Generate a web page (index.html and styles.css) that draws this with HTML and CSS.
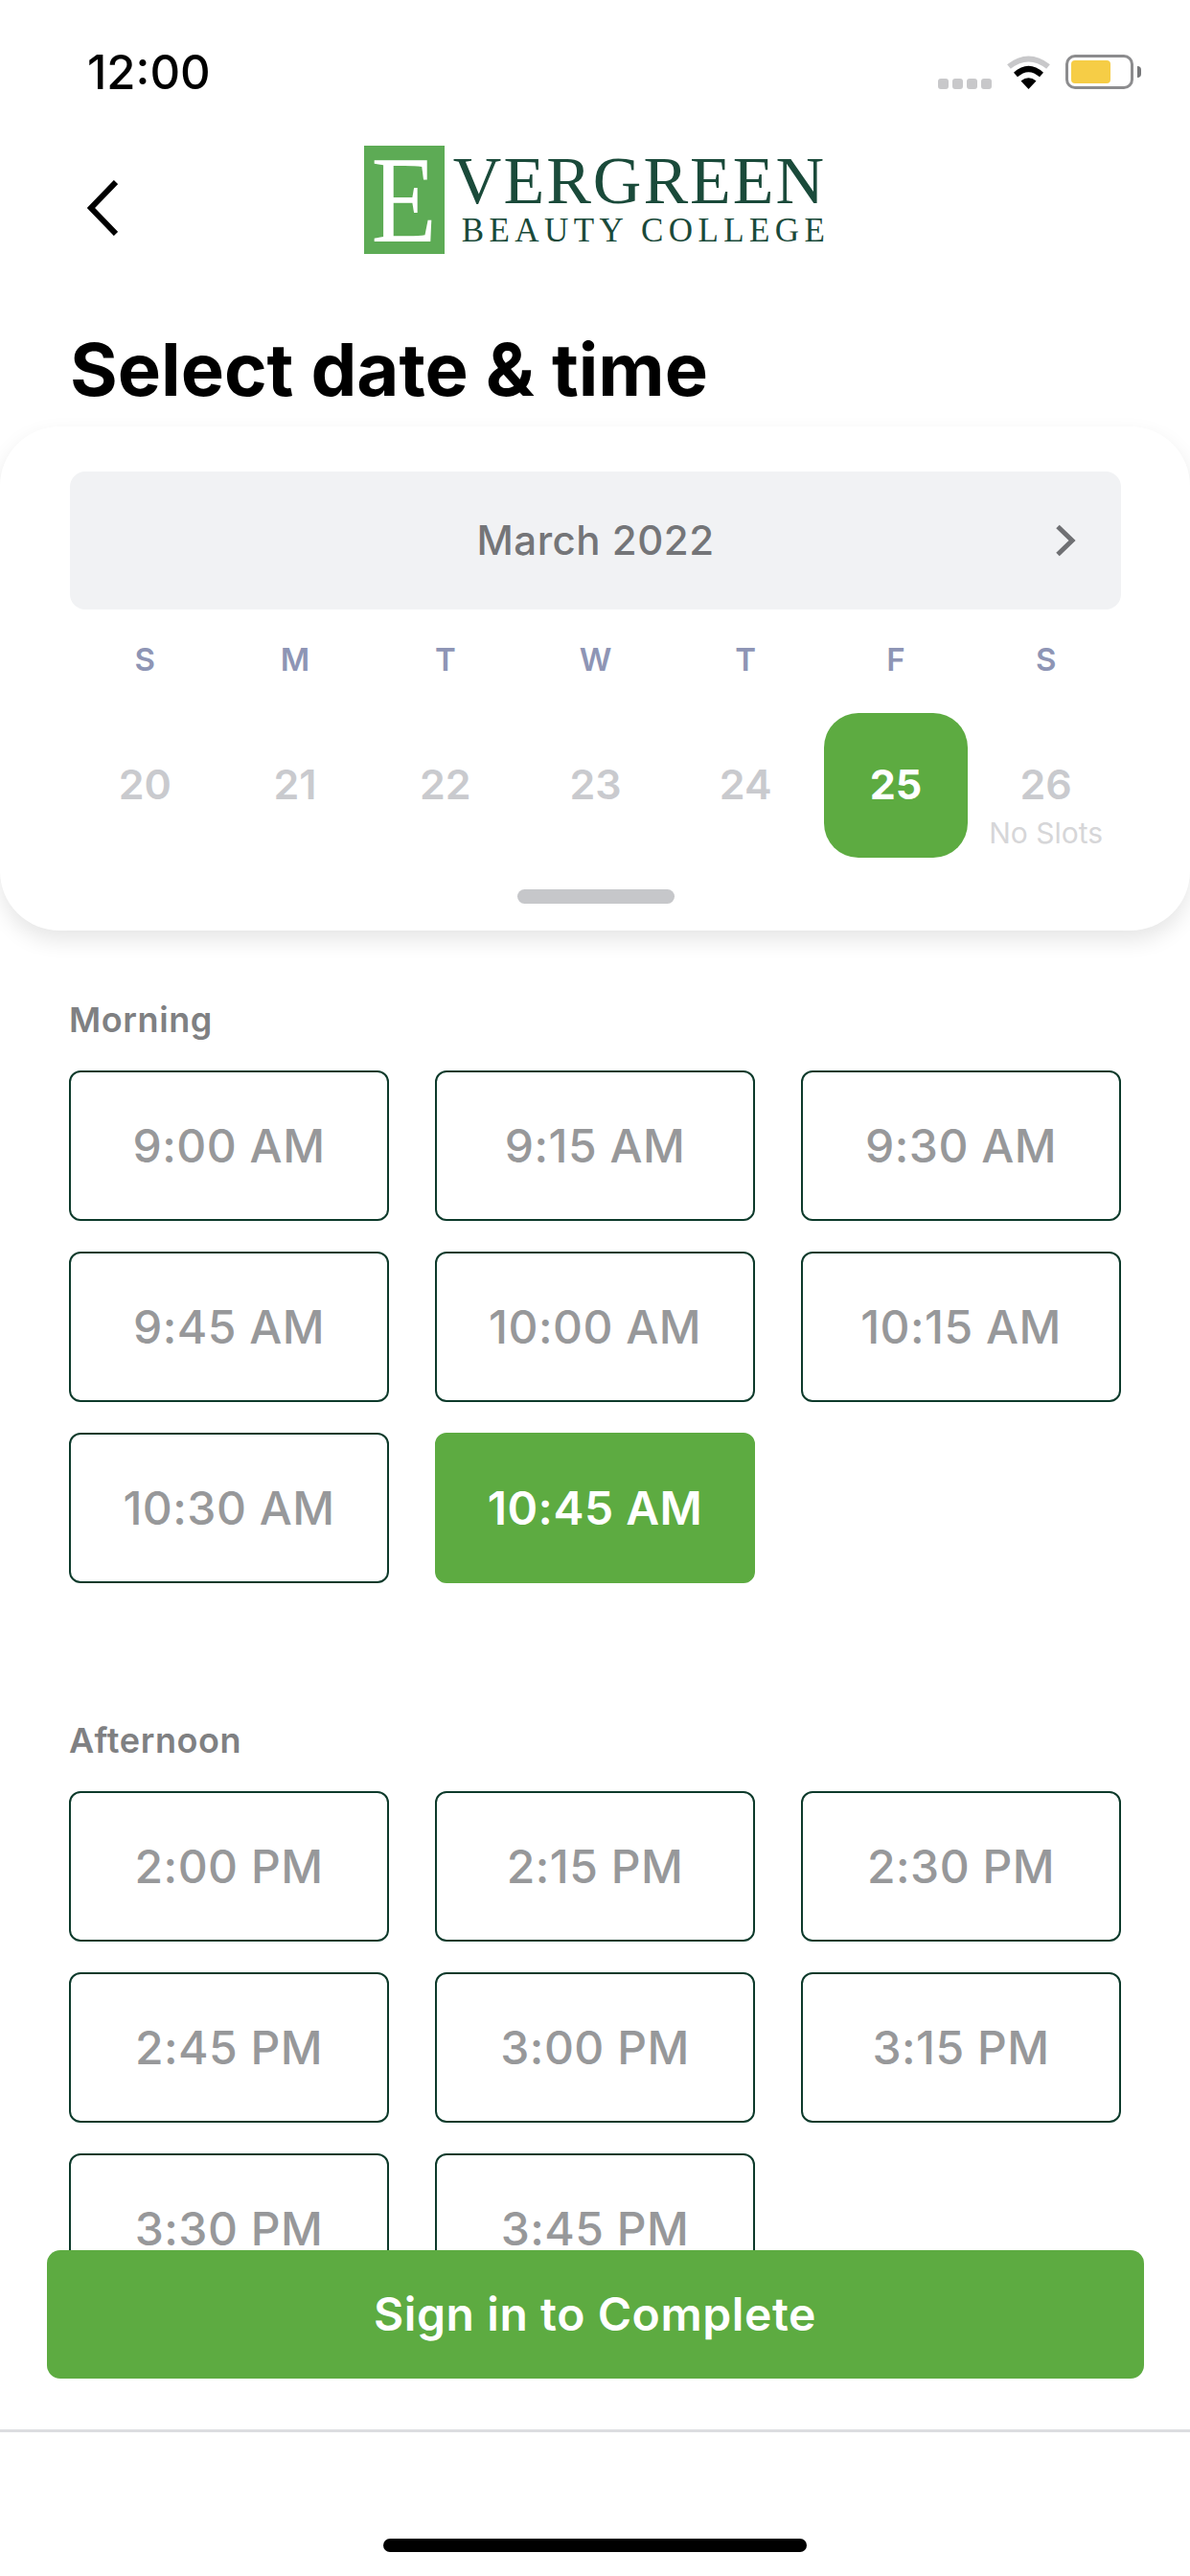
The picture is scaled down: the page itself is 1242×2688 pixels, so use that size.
FILE: index.html
```html
<!DOCTYPE html>
<html lang="en">
<head>
<meta charset="utf-8">
<title>Select date &amp; time</title>
<link rel="stylesheet" href="styles.css">
</head>
<body>
<div class="screen">
  <header class="status">
    <span class="clock">12:00</span>
    <div class="status-icons">
      <div class="signal"><i></i><i></i><i></i><i></i></div>
      <svg class="wifi" width="47" height="36" viewBox="0 0 47 36"><path d="M3 12.5Q23.5 -3.5 44 12.5" fill="none" stroke="#c8c8ca" stroke-width="6"/><path d="M10 21Q23.5 9 37 21" fill="none" stroke="#000" stroke-width="6"/><path d="M15.5 27.5Q23.5 21 31.5 27.5L23.5 36Z" fill="#000"/></svg>
      <div class="battery"><div class="battery-body"><div class="battery-fill"></div></div><div class="battery-nub"></div></div>
    </div>
  </header>
  <nav class="nav">
    <svg class="back" width="32" height="58" viewBox="0 0 32 58"><path d="M30 2L4 29L30 56" fill="none" stroke="#000" stroke-width="6"/></svg>
    <div class="logo">
      <div class="logo-mark"><span>E</span></div>
      <div class="logo-words">
        <div class="logo-top">VERGREEN</div>
        <div class="logo-bottom">BEAUTY COLLEGE</div>
      </div>
    </div>
  </nav>
  <h1 class="title">Select date &amp; time</h1>
  <section class="calendar">
    <div class="month">
      <span class="month-name">March 2022</span>
      <svg class="month-next" width="22" height="34" viewBox="0 0 22 34"><path d="M3 2.500L18 17L3 31.500" fill="none" stroke="#6f7073" stroke-width="5"/></svg>
    </div>
    <div class="week">
      <span>S</span><span>M</span><span>T</span><span>W</span><span>T</span><span>F</span><span>S</span>
    </div>
    <div class="dates">
      <div class="date">20</div>
      <div class="date">21</div>
      <div class="date">22</div>
      <div class="date">23</div>
      <div class="date">24</div>
      <div class="date date-on">25</div>
      <div class="date">26<small>No Slots</small></div>
    </div>
    <div class="grabber"></div>
  </section>
  <main class="times">
    <section class="period">
      <h2>Morning</h2>
      <div class="slots">
        <div class="slot">9:00 AM</div>
        <div class="slot">9:15 AM</div>
        <div class="slot">9:30 AM</div>
        <div class="slot">9:45 AM</div>
        <div class="slot">10:00 AM</div>
        <div class="slot">10:15 AM</div>
        <div class="slot">10:30 AM</div>
        <div class="slot slot-on">10:45 AM</div>
      </div>
    </section>
    <section class="period">
      <h2>Afternoon</h2>
      <div class="slots">
        <div class="slot">2:00 PM</div>
        <div class="slot">2:15 PM</div>
        <div class="slot">2:30 PM</div>
        <div class="slot">2:45 PM</div>
        <div class="slot">3:00 PM</div>
        <div class="slot">3:15 PM</div>
        <div class="slot">3:30 PM</div>
        <div class="slot">3:45 PM</div>
      </div>
    </section>
  </main>
  <footer class="footer">
    <div class="cta">Sign in to Complete</div>
    <div class="rule"></div>
    <div class="home"></div>
  </footer>
</div>
</body>
</html>
```
FILE: styles.css
```css
* { box-sizing: border-box; }
html, body { margin: 0; padding: 0; background: #fff; }
body { font-family: Inter, "Liberation Sans", sans-serif; }
.screen { position: relative; width: 1242px; height: 2688px; overflow: hidden; background: #fff; display: flex; flex-direction: column; }

.status { height: 150px; flex: none; display: flex; align-items: center; justify-content: space-between; padding: 0 51px 0 91px; }
.clock { font-size: 49px; font-weight: 500; color: #000; line-height: 1; }
.status-icons { display: flex; align-items: flex-end; height: 36px; }
.signal { display: flex; gap: 4px; margin-right: 15px; }
.signal i { width: 11px; height: 11px; border-radius: 3px; background: #c8c8ca; }
.wifi { display: block; margin-right: 15px; }
.battery { display: flex; align-items: center; height: 36px; }
.battery-body { width: 71px; height: 36px; border: 3px solid #8c8c8e; border-radius: 10px; padding: 3px; }
.battery-fill { width: 41px; height: 24px; border-radius: 4px; background: #f6cd46; }
.battery-nub { width: 4px; height: 12px; margin-left: 4px; background: #77787a; border-radius: 0 6px 6px 0; }

.nav { height: 117px; flex: none; display: grid; grid-template-columns: 1fr auto 1fr; padding-top: 2px; }
.back { display: block; margin: 36px 0 0 91px; }
.logo { display: flex; height: 113px; grid-column: 2; }
.logo-mark { width: 84px; height: 113px; background: #5dab55; display: flex; justify-content: center; }
.logo-mark span { font-family: "Liberation Serif", serif; font-size: 130px; line-height: 113px; color: #fff; transform: scaleX(.86); }
.logo-words { margin-left: 9px; font-family: "Liberation Serif", serif; color: #1a4a3a; white-space: nowrap; }
.logo-top { font-size: 70px; line-height: 46px; letter-spacing: 2px; margin-top: 14px; }
.logo-bottom { font-size: 35px; line-height: 24px; letter-spacing: 5.4px; margin: 17px -5px 0 9px; }

.title { flex: none; height: 178px; margin: 0; padding: 76px 0 0 73px; font-size: 76px; font-weight: 700; line-height: 84px; color: #000; }

.calendar { flex: none; position: relative; z-index: 1; height: 526px; padding: 47px 72px 0 73px; border-radius: 62px; background: #fff; box-shadow: 0 10px 22px rgba(0,0,0,.1); }
.month { position: relative; height: 144px; padding-bottom: 2px; border-radius: 16px; background: #f1f2f4; display: flex; align-items: center; justify-content: center; }
.month-name { font-size: 42px; font-weight: 500; letter-spacing: .5px; color: #747578; }
.month-next { position: absolute; right: 47px; top: 55px; }
.week { display: grid; grid-template-columns: repeat(7, 1fr); margin-top: 30px; text-align: center; font-size: 33px; font-weight: 600; line-height: 44px; color: #8e95b5; }
.dates { display: grid; grid-template-columns: repeat(7, 1fr); margin-top: 34px; }
.date { position: relative; height: 151px; width: 150px; justify-self: center; padding-top: 49px; text-align: center; font-size: 43px; font-weight: 600; line-height: 50px; color: #c9cace; }
.date small { display: block; margin-top: 9px; font-size: 30px; font-weight: 400; line-height: 34px; color: #d6d6d8; white-space: nowrap; }
.date-on { border-radius: 36px; background: #5dab41; color: #fff; font-weight: 700; }
.grabber { width: 164px; height: 15px; margin: 33px auto 0; border-radius: 8px; background: #c6c7ca; }

.times { flex: 1; min-height: 0; overflow: hidden; padding: 71px 72px 0; }
.period { margin-bottom: 142px; }
.period h2 { margin: 0 0 31px; font-size: 36px; font-weight: 600; letter-spacing: .6px; line-height: 44px; color: #7f8082; }
.slots { display: grid; grid-template-columns: repeat(3, 334px); grid-auto-rows: 157px; gap: 32px 48px; }
.slot { display: flex; align-items: center; justify-content: center; border: 2px solid #0d3a2b; border-radius: 12px; font-size: 48px; font-weight: 550; letter-spacing: .5px; color: #97989a; }
.slot-on { border-color: #5dab41; background: #5dab41; color: #fff; font-weight: 600; }

.footer { position: absolute; left: 0; right: 0; bottom: 0; display: flex; flex-direction: column; align-items: center; }
.cta { width: 1145px; height: 134px; padding-bottom: 2px; border-radius: 14px; background: #5dab41; display: flex; align-items: center; justify-content: center; color: #fff; font-size: 48px; font-weight: 600; letter-spacing: .6px; }
.rule { align-self: stretch; height: 3px; margin-top: 53px; background: #dcdde0; }
.home { width: 442px; height: 14px; margin: 111px 0 25px; border-radius: 7px; background: #000; }
```
